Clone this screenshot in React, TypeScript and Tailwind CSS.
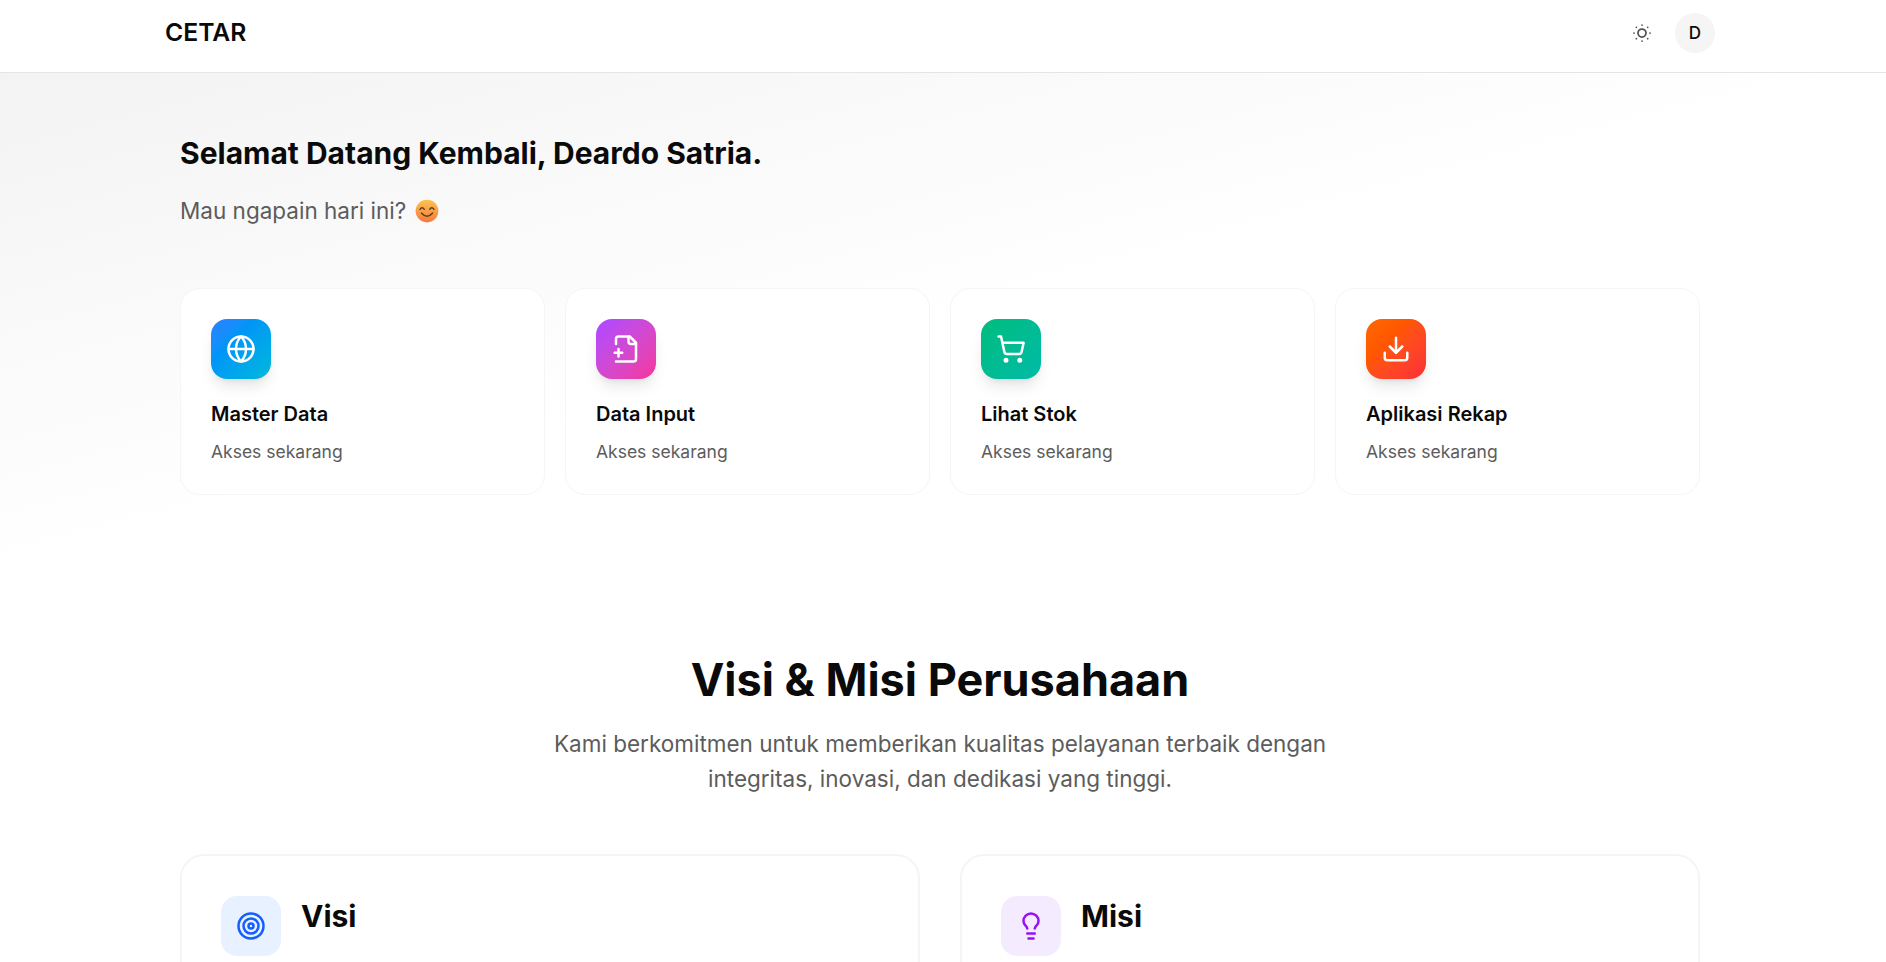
import { Download, Globe, Lightbulb, ShoppingCart, SunDim, Target } from "lucide-react"

const FilePlusIcon = ({ size = 30, className = "" }: { size?: number; className?: string }) => (
  <svg width={size} height={size} viewBox="0 0 24 24" fill="none" stroke="currentColor" strokeWidth="2" strokeLinecap="round" strokeLinejoin="round" className={className}>
    <path d="M4 22h14a2 2 0 0 0 2-2V7l-5-5H6a2 2 0 0 0-2 2v4" />
    <path d="M14 2v4a2 2 0 0 0 2 2h4" />
    <path d="M3 15h6" />
    <path d="M6 12v6" />
  </svg>
)

const menus = [
  { title: "Master Data", icon: Globe, color: "from-blue-500 to-cyan-500" },
  { title: "Data Input", icon: FilePlusIcon, color: "from-purple-500 to-pink-500" },
  { title: "Lihat Stok", icon: ShoppingCart, color: "from-emerald-500 to-teal-500" },
  { title: "Aplikasi Rekap", icon: Download, color: "from-orange-500 to-red-500" },
]

const Emoji = () => (
  <svg width="26" height="26" viewBox="0 0 24 24" className="ml-2 inline-block">
    <defs>
      <linearGradient id="face" x1="0" y1="0" x2="0" y2="1">
        <stop offset="0" stopColor="#fbc44e" />
        <stop offset="1" stopColor="#f5793f" />
      </linearGradient>
    </defs>
    <ellipse cx="12" cy="12" rx="10.500" ry="10.500" fill="url(#face)" />
    <path d="M5.500 10.500q2-3 4 0M14.500 10.500q2-3 4 0" fill="none" stroke="#5a3a22" strokeWidth="1.3" strokeLinecap="round" />
    <path d="M7 14q5 5.500 10 0" fill="none" stroke="#5a3a22" strokeWidth="1.4" strokeLinecap="round" />
  </svg>
)

export default function App() {
  return (
    <div className="relative h-[962px] overflow-hidden bg-white font-['Inter',sans-serif] text-[#0a0a0a]">
      <header className="h-[73px] border-b border-[#e5e5e5]">
        <div className="mx-auto flex w-[1550px] -translate-x-[3px] items-center justify-between pt-[13px]">
          <span className="text-[24.700px] leading-[36px] font-semibold -mt-[3px]">CETAR</span>
          <div className="flex items-center gap-[21px]">
            <SunDim size={24} strokeWidth={1.75} className="text-[#525252]" />
            <div className="flex h-10 w-10 items-center justify-center rounded-full bg-[#f5f5f5] pt-px text-[17px] font-medium">D</div>
          </div>
        </div>
      </header>

      <section className="bg-gradient-to-br from-[#f3f3f3] to-white to-50% pb-[80px]">
        <div className="mx-auto w-[1520px] -translate-x-[3px] pt-[62px]">
          <h1 className="text-[30px] leading-[36px] font-bold">Selamat Datang Kembali, Deardo Satria.</h1>
          <p className="mt-6 flex items-center text-[22.500px] leading-[32px] text-[#5c5c5c]">
            Mau ngapain hari ini? <Emoji />
          </p>
          <div className="mt-[61px] grid grid-cols-4 gap-5">
            {menus.map((m) => (
              <div key={m.title} className="h-[207px] rounded-[20px] border border-[#f5f5f5] bg-white p-[30px]">
                <div className={`flex h-[60px] w-[60px] items-center justify-center rounded-2xl bg-gradient-to-br ${m.color} shadow-lg`}>
                  <m.icon size={30} className="text-white" />
                </div>
                <h3 className="mt-5 text-[20px] leading-[30px] font-semibold">{m.title}</h3>
                <p className="mt-[9px] text-[17.500px] leading-[28px] text-[#5c5c5c]">Akses sekarang</p>
              </div>
            ))}
          </div>
        </div>
      </section>

      <section className="mx-auto w-[1520px] -translate-x-[3px] pt-[75px]">
        <h2 className="text-center text-[45px] leading-[60px] font-bold">Visi &amp; Misi Perusahaan</h2>
        <p className="mx-auto mt-4 w-[800px] text-center text-[22.500px] leading-[35px] text-[#5c5c5c]">
          Kami berkomitmen untuk memberikan kualitas pelayanan terbaik dengan integritas, inovasi, dan dedikasi yang tinggi.
        </p>
        <div className="mt-[58px] grid grid-cols-2 gap-10">
          <div className="h-[300px] rounded-3xl border-2 border-[#f5f5f5] px-[39px] pt-[40px]">
            <div className="flex gap-5">
              <div className="flex h-[60px] w-[60px] items-center justify-center rounded-2xl bg-[#e8f1ff]">
                <Target size={30} className="text-blue-600" />
              </div>
              <h3 className="mt-[2px] text-[30px] leading-[36px] font-bold">Visi</h3>
            </div>
          </div>
          <div className="h-[300px] rounded-3xl border-2 border-[#f5f5f5] px-[39px] pt-[40px]">
            <div className="flex gap-5">
              <div className="flex h-[60px] w-[60px] items-center justify-center rounded-2xl bg-[#f5ebff]">
                <Lightbulb size={30} className="text-purple-600" />
              </div>
              <h3 className="mt-[2px] text-[30px] leading-[36px] font-bold">Misi</h3>
            </div>
          </div>
        </div>
      </section>
    </div>
  )
}
